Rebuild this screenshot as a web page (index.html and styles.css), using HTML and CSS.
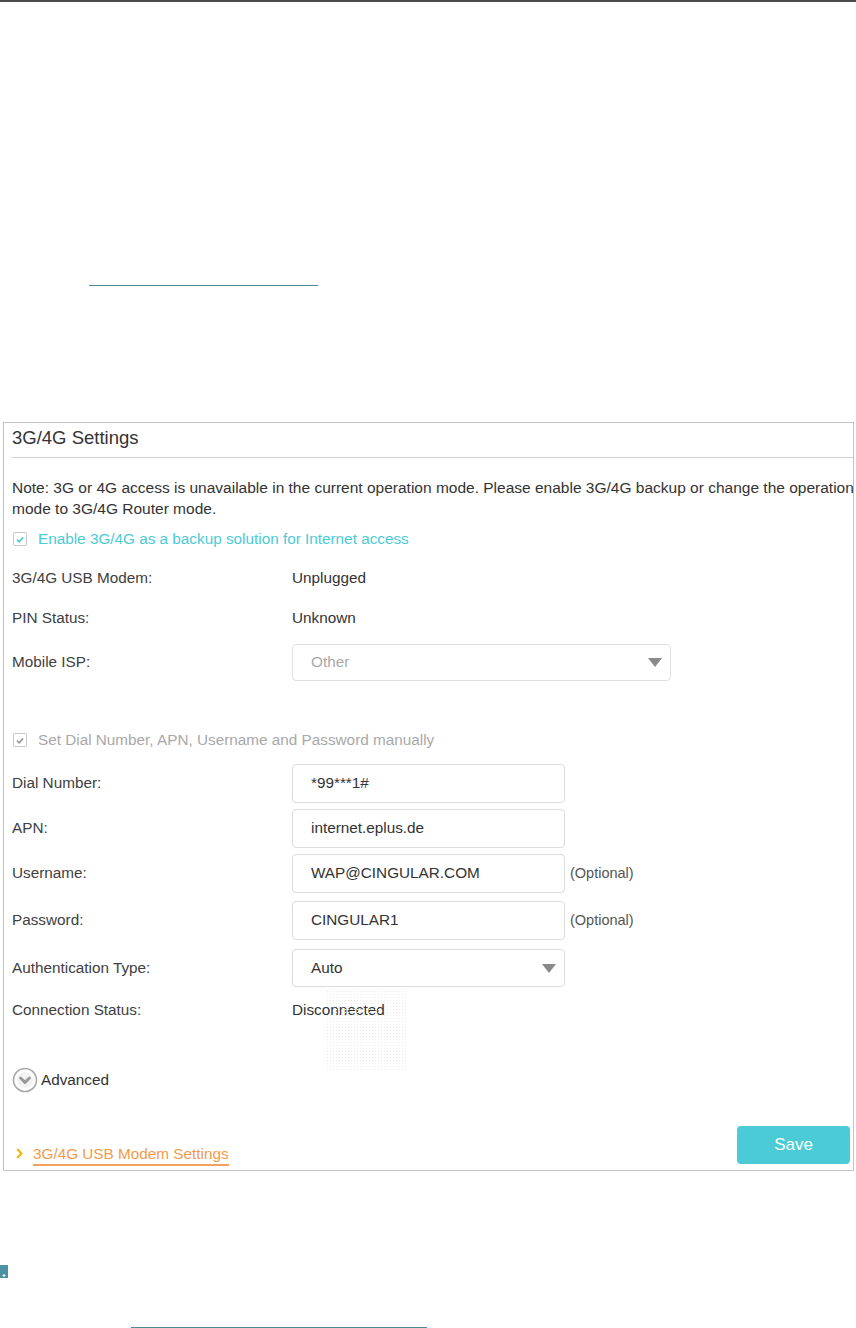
FILE: index.html
```html
<!DOCTYPE html>
<html>
<head>
<meta charset="utf-8">
<link rel="stylesheet" href="styles.css">
</head>
<body>
<div class="topbar"></div>
<div class="top-space">
  <div class="link-line top-link"></div>
</div>

<div class="panel">
  <div class="panel-head">3G/4G Settings</div>
  <div class="panel-body">
    <p class="note">Note: 3G or 4G access is unavailable in the current operation mode. Please enable 3G/4G backup or change the operation<br>mode to 3G/4G Router mode.</p>

    <div class="check-row cb1">
      <span class="cbox teal"><svg viewBox="0 0 13 13" width="13" height="13"><path d="M3.2 6.6 L5.6 9 L9.8 4.2" fill="none" stroke="#4acbd6" stroke-width="1.8"/></svg></span>
      <span class="cb-text teal-text">Enable 3G/4G as a backup solution for Internet access</span>
    </div>

    <div class="row r-modem"><span class="label">3G/4G USB Modem:</span><span class="value">Unplugged</span></div>
    <div class="row r-pin"><span class="label">PIN Status:</span><span class="value">Unknown</span></div>
    <div class="row r-isp"><span class="label">Mobile ISP:</span>
      <div class="select wide disabled"><span>Other</span><span class="caret"></span></div>
    </div>

    <div class="check-row cb2">
      <span class="cbox grey"><svg viewBox="0 0 13 13" width="13" height="13"><path d="M3.2 6.6 L5.6 9 L9.8 4.2" fill="none" stroke="#9a9a9a" stroke-width="1.8"/></svg></span>
      <span class="cb-text grey-text">Set Dial Number, APN, Username and Password manually</span>
    </div>

    <div class="row r-dial"><span class="label">Dial Number:</span><div class="input">*99***1#</div></div>
    <div class="row r-apn"><span class="label">APN:</span><div class="input">internet.eplus.de</div></div>
    <div class="row r-user"><span class="label">Username:</span><div class="input">WAP@CINGULAR.COM</div><span class="opt">(Optional)</span></div>
    <div class="row r-pass"><span class="label">Password:</span><div class="input">CINGULAR1</div><span class="opt">(Optional)</span></div>
    <div class="row r-auth"><span class="label">Authentication Type:</span>
      <div class="select"><span>Auto</span><span class="caret"></span></div>
    </div>
    <div class="row r-conn"><span class="label">Connection Status:</span><span class="value">Disconnected</span><span class="noise"></span></div>

    <div class="advanced">
      <svg class="adv-icon" viewBox="0 0 26 26" width="26" height="26">
        <circle cx="13" cy="13" r="11.5" fill="#fff" stroke="#a8a8a8" stroke-width="1.6"/>
        <circle cx="13" cy="13" r="8" fill="#f2f2f2"/>
        <path d="M8.6 11 L13 15.4 L17.4 11" fill="none" stroke="#9a9a9a" stroke-width="3" stroke-linecap="round" stroke-linejoin="round"/>
      </svg>
      <span>Advanced</span>
    </div>

    <div class="panel-foot">
      <a class="foot-link"><svg class="chev" viewBox="0 0 7 11" width="7" height="11"><path d="M1.2 1 L5.4 5.5 L1.2 10" fill="none" stroke="#f5b400" stroke-width="2"/></svg><span class="foot-text">3G/4G USB Modem Settings</span></a>
      <button class="save">Save</button>
    </div>
  </div>
</div>

<div class="bottom-space">
  <svg class="bookmark" viewBox="0 0 9 13" width="9" height="13"><path d="M0 0 H8 V13 H0 Z" fill="#4a93a5"/><path d="M4 9 V12 M2.6 10.5 H5.4" stroke="#fff" stroke-width="1"/></svg>
  <div class="link-line bottom-link"></div>
</div>
</body>
</html>
```
FILE: styles.css
```css
* { box-sizing: border-box; }
html, body { margin: 0; padding: 0; background: #fff; }
body {
  width: 856px;
  height: 1328px;
  overflow: hidden;
  font-family: "Liberation Sans", Arial, sans-serif;
  color: #333;
  font-size: 15.3px;
}
.topbar { height: 2px; background: #4b4b4b; }
.top-space { height: 420px; padding-top: 283px; }
.link-line { height: 1px; background: #4a8a99; }
.top-link { margin-left: 89px; width: 229px; }

.panel {
  margin-left: 3px;
  width: 851px;
  height: 749px;
  border: 1px solid #c4c4c4;
}
.panel-head {
  margin-left: 8px;
  height: 35px;
  padding-top: 4px;
  line-height: 21px;
  font-size: 18.5px;
  color: #333;
  border-bottom: 1px solid #cfcfcf;
}
.panel-body { padding-left: 8px; padding-right: 1px; }
.note {
  margin: 19px -6px 0 0;
  line-height: 21px;
  font-size: 15.5px;
  color: #333;
  white-space: nowrap;
}
.check-row { display: flex; align-items: center; }
.cb1 { height: 40px; }
.cb2 { height: 40px; margin-top: 35px; }
.cbox {
  width: 14px; height: 14px;
  margin-left: 1px;
  border: 1px solid #c8c8c8;
  border-radius: 2px;
  display: flex; align-items: center; justify-content: center;
}
.cbox svg { display: block; }
.cb-text { margin-left: 11px; }
.teal-text { color: #4acbd6; }
.grey-text { color: #a8a8a8; }

.row { display: flex; align-items: center; position: relative; }
.label { width: 280px; flex: none; color: #404040; }
.value { color: #333; }
.r-modem { height: 38px; }
.r-pin { height: 42px; }
.r-isp { height: 46px; }
.r-dial { height: 46px; }
.r-apn { height: 44px; }
.r-user { height: 46px; }
.r-pass { height: 48px; }
.r-auth { height: 48px; }
.r-conn { height: 36px; }

.input, .select {
  width: 273px;
  height: 39px;
  border: 1px solid #dcdcdc;
  border-radius: 4px;
  padding-left: 18px;
  display: flex;
  align-items: center;
  color: #333;
  background: #fff;
}
.select { height: 38px; justify-content: space-between; padding-right: 8px; }
.select.wide { width: 379px; height: 37px; }
.disabled { color: #aaa; border-color: #e0e0e0; }
.caret {
  width: 0; height: 0;
  border-left: 7px solid transparent;
  border-right: 7px solid transparent;
  border-top: 9px solid #8a8a8a;
}
.opt { margin-left: 5px; color: #555; font-size: 14.5px; }

.noise {
  position: absolute;
  left: 314px; top: -2px;
  width: 82px; height: 80px;
  background-image: radial-gradient(#ebebeb 0.6px, transparent 0.8px);
  background-size: 3px 3px;
}

.advanced {
  margin-top: 32px;
  height: 40px;
  display: flex;
  align-items: center;
  color: #333;
}
.adv-icon { display: block; margin-right: 3px; }

.panel-foot {
  height: 69px;
  display: flex;
  justify-content: space-between;
  align-items: flex-end;
  padding-bottom: 3px;
}
.foot-link { display: flex; align-items: center; margin-left: 4px; }
.chev { display: block; margin-right: 10px; margin-top: -2px; }
.foot-text {
  color: #f39a4a;
  font-size: 15.3px;
  line-height: 21px;
  border-bottom: 2px solid #f5a05c;
}
.save {
  width: 113px;
  height: 38px;
  margin-bottom: 2px;
  margin-right: 2px;
  border: none;
  border-radius: 4px;
  background: #4acbd6;
  color: #fff;
  font-family: "Liberation Sans", Arial, sans-serif;
  font-size: 17px;
}

.bottom-space { position: relative; height: 157px; padding-top: 94px; }
.bookmark { display: block; }
.bottom-link { margin-top: 49px; margin-left: 131px; width: 296px; }
```
